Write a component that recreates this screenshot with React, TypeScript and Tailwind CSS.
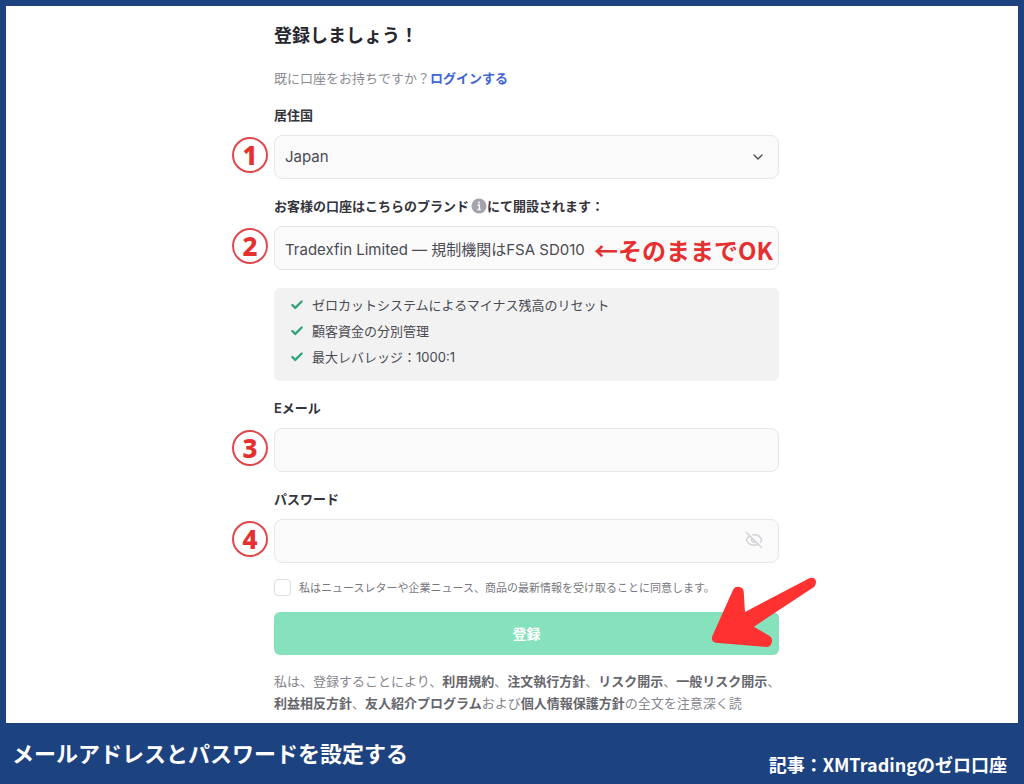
import React, { useState } from 'react';
import { Check, ChevronDown, EyeOff } from 'lucide-react';

interface StepFieldProps {
  step: number;
  children: React.ReactNode;
}

const FEATURES = [
  'ゼロカットシステムによるマイナス残高のリセット',
  '顧客資金の分別管理',
  '最大レバレッジ：1000:1',
];

const FIELD_CLASS =
  'block w-full h-11 rounded-lg border border-[#e6e6ea] bg-[#fafafb] px-[10px] text-[15px] text-[#4a4a52] outline-none focus:border-[#85e0bd]';

const LABEL_CLASS = 'mt-[17px] mb-[10px] text-[13px] leading-5 font-semibold text-[#33333b]';

// Field with its numbered marker in the left gutter
const StepField: React.FC<StepFieldProps> = ({ step, children }) => (
  <div className="relative">
    <span className="absolute -left-[42px] top-[2px] flex h-9 w-9 items-center justify-center rounded-full border-2 border-[#e0474c] text-[26px] leading-none font-extrabold text-[#e5302f] font-['Noto_Sans',sans-serif]">
      {step}
    </span>
    {children}
  </div>
);

const InfoIcon = () => (
  <svg className="ml-[2px] h-4 w-4 shrink-0" viewBox="0 0 16 16" aria-hidden="true">
    <circle cx="8" cy="8" r="7.5" fill="#a3a3ab" />
    <circle cx="8" cy="4.6" r="1" fill="#fff" />
    <path d="M6.6 7h1.8v4.4M6.4 11.5h3.4" fill="none" stroke="#fff" strokeWidth="1.3" />
  </svg>
);

const RedArrow = () => (
  <svg
    className="pointer-events-none absolute -right-[41px] -top-[38px] h-[76px] w-[112px]"
    viewBox="624 222 336 228"
    aria-hidden="true"
  >
    <path
      d="M637 408 L699 270 Q703 260 714 260 Q729 261 731 273 L735 336 L925 236 Q937 230 945 237 Q952 248 943 260 L762 380 L810 409 Q819 416 815 428 Q811 441 800 441 L647 428 Q632 425 637 408 Z"
      fill="#ff3131"
    />
  </svg>
);

export default function App() {
  const [country, setCountry] = useState('Japan');
  const [showPassword, setShowPassword] = useState(false);
  const [agreed, setAgreed] = useState(false);

  return (
    <div className="flex min-h-screen flex-col bg-[#1d4280] font-['Inter','Noto_Sans_CJK_JP',sans-serif]">
      <main className="mx-[6px] mt-[6px] flex-1 bg-white pl-[29px] pt-4 pb-2">
        <form className="mx-auto w-full max-w-[505px]" onSubmit={(e) => e.preventDefault()}>
          <h1 className="text-lg leading-7 font-semibold text-[#26262f]">登録しましょう！</h1>
          <p className="mt-[18px] text-[13px] leading-5 text-[#8c8c92]">
            既に口座をお持ちですか？
            <a href="#login" className="font-semibold text-[#4365d2]">ログインする</a>
          </p>

          <label htmlFor="country" className={`block ${LABEL_CLASS}`}>居住国</label>
          <StepField step={1}>
            <select
              id="country"
              value={country}
              onChange={(e) => setCountry(e.target.value)}
              className={`appearance-none ${FIELD_CLASS}`}
            >
              <option>Japan</option>
            </select>
            <ChevronDown className="pointer-events-none absolute right-[13px] top-[14px] h-4 w-4 text-[#4a4a52]" />
          </StepField>

          <label htmlFor="brand" className={`flex items-center ${LABEL_CLASS}`}>
            お客様の口座はこちらのブランド
            <InfoIcon />
            にて開設されます：
          </label>
          <StepField step={2}>
            <input
              id="brand"
              readOnly
              value="Tradexfin Limited — 規制機関はFSA SD010"
              className={FIELD_CLASS}
            />
            <span className="pointer-events-none absolute right-[6px] top-[6px] text-2xl leading-9 font-bold text-[#e5302f] font-['Noto_Sans_CJK_JP',sans-serif]">
              ←そのままでOK
            </span>
          </StepField>

          <ul className="mt-[18px] rounded-md bg-[#f2f2f3] px-4 pt-1 pb-[11px] text-[13px] leading-[26px] text-[#4a4a52]">
            {FEATURES.map((feature) => (
              <li key={feature} className="flex items-center gap-2">
                <Check className="h-[14px] w-[14px] shrink-0 text-[#2fa37c]" strokeWidth={4} />
                {feature}
              </li>
            ))}
          </ul>

          <label htmlFor="email" className={`block ${LABEL_CLASS}`}>Eメール</label>
          <StepField step={3}>
            <input id="email" type="email" className={FIELD_CLASS} />
          </StepField>

          <label htmlFor="password" className={`block ${LABEL_CLASS}`}>パスワード</label>
          <StepField step={4}>
            <input id="password" type={showPassword ? 'text' : 'password'} className={FIELD_CLASS} />
            <button
              type="button"
              aria-label="パスワードを表示"
              onClick={() => setShowPassword(!showPassword)}
              className="absolute right-4 top-3 text-[#d3d3da]"
            >
              <EyeOff className="h-[18px] w-[18px]" />
            </button>
          </StepField>

          <div className="mt-4 flex items-center gap-2">
            <input
              id="news"
              type="checkbox"
              checked={agreed}
              onChange={(e) => setAgreed(e.target.checked)}
              className="h-[17px] w-[17px] shrink-0 appearance-none rounded border border-[#dedee2] bg-white checked:bg-[#85e0bd]"
            />
            <label htmlFor="news" className="text-[11px] leading-4 text-[#77777e]">
              私はニュースレターや企業ニュース、商品の最新情報を受け取ることに同意します。
            </label>
          </div>

          <div className="relative mt-4">
            <button type="submit" className="h-[43px] w-full rounded-md bg-[#86e1bd] text-sm font-bold text-white">
              登録
            </button>
            <RedArrow />
          </div>

          <p className="mt-[15px] text-[13px] leading-[22px] text-[#85858c] sm:whitespace-nowrap [&>b]:font-semibold [&>b]:text-[#66666d]">
            私は、登録することにより、<b>利用規約</b>、<b>注文執行方針</b>、<b>リスク開示</b>、<b>一般リスク開示</b>、
            <br />
            <b>利益相反方針</b>、<b>友人紹介プログラム</b>および<b>個人情報保護方針</b>の全文を注意深く読
          </p>
        </form>
      </main>

      <footer className="flex items-start justify-between gap-4 py-[6px] pl-3 pr-[17px] font-bold text-white font-['Noto_Sans_CJK_JP',sans-serif]">
        <p className="text-[22px] leading-[46px]">メールアドレスとパスワードを設定する</p>
        <p className="pt-[21px] text-lg leading-7">記事：XMTradingのゼロ口座</p>
      </footer>
    </div>
  );
}
